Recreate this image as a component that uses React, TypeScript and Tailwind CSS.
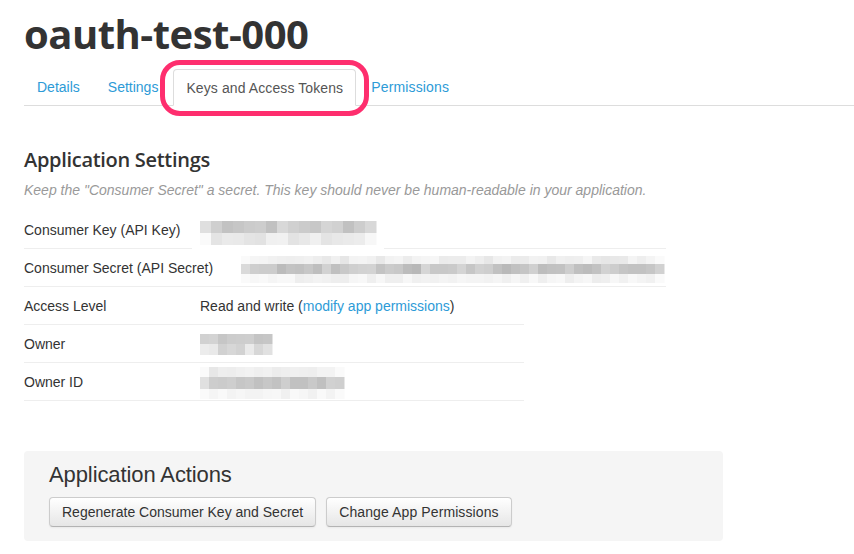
import React from "react";

type RowSpec = { y: number; h: number; base: number; spread: number };

function rand(seed: number) {
  let s = seed;
  return () => {
    s = (s * 9301 + 49297) % 233280;
    return s / 233280;
  };
}

function Blur({
  width,
  height,
  x0,
  cells,
  cell,
  rows,
  seed,
  edge = true,
}: {
  width: number;
  height: number;
  x0: number;
  cells: number;
  cell: number;
  rows: RowSpec[];
  seed: number;
  edge?: boolean;
}) {
  const r = rand(seed);
  const rects: React.ReactNode[] = [];
  rows.forEach((row, ri) => {
    for (let i = 0; i < cells; i++) {
      let v = Math.round(row.base + (r() - 0.5) * 2 * row.spread);
      if (edge && (i === 0 || i === cells - 1)) v = Math.min(250, v + 18);
      v = Math.max(160, Math.min(252, v));
      rects.push(
        <rect
          key={`${ri}-${i}`}
          x={x0 + i * cell}
          y={row.y}
          width={cell + 0.5}
          height={row.h}
          fill={`rgb(${v},${v},${v})`}
        />
      );
    }
  });
  return (
    <svg width={width} height={height} className="block shrink-0 overflow-visible">
      <rect x={0} y={0} width={width} height={height} fill="#ffffff" />
      {rects}
    </svg>
  );
}

const label = "text-[14px] leading-5 text-[#333] pt-[9px] pb-[7px]";
const tab = "px-[13px] mr-[2px] py-2 text-[14px] leading-5 text-[#2d9bd7]";
const btn =
  "h-[30px] px-[12px] text-[14px] leading-5 text-[#333] rounded-[4px] border border-[#ccc] border-b-[#b3b3b3] bg-gradient-to-b from-white to-[#e6e6e6] shadow-[inset_0_1px_0_rgba(255,255,255,0.2),0_1px_2px_rgba(0,0,0,0.05)]";

export default function App() {
  return (
    <div
      className="w-[854px] h-[554px] overflow-hidden bg-white pl-6 relative"
      style={{ fontFamily: '"Liberation Sans", Arial, sans-serif' }}
    >
      <h1
        className="pt-[11px] text-[40px] leading-[46px] font-bold tracking-[-0.5px] text-[#333]"
        style={{ fontFamily: '"Open Sans", sans-serif' }}
      >
        oauth-test-000
      </h1>

      {/* tabs */}
      <div className="mt-[12px] flex border-b border-[#ddd] h-[37px]">
        <a className={tab}>Details</a>
        <a className={tab}>Settings</a>
        <a className="px-[12px] mr-[2px] py-2 text-[14px] leading-5 tracking-[0.1px] text-[#555] bg-white border border-[#ddd] border-b-transparent rounded-t-[4px] -mb-px h-[37px]">
          Keys and Access Tokens
        </a>
        <a className={`${tab} tracking-[0.15px]`}>Permissions</a>
      </div>

      {/* highlight */}
      <div className="absolute left-[160px] top-[60px] w-[209px] h-[56px] rounded-[20px] border-[5px] border-[#fe2e6e] pointer-events-none" />

      <h2
        className="mt-[39px] text-[20px] leading-[30px] font-semibold tracking-[-0.3px] text-[#333]"
        style={{ fontFamily: '"Open Sans", sans-serif' }}
      >
        Application Settings
      </h2>
      <p className="mt-[5px] text-[14px] leading-5 italic text-[#999]">
        Keep the "Consumer Secret" a secret. This key should never be human-readable in your application.
      </p>

      <div className="mt-[11px]">
        {/* Consumer Key */}
        <div className="w-[642px]">
          <div className="flex h-[37px]">
            <div className={`${label} w-[168px]`}>Consumer Key (API Key)</div>
            <Blur
              width={192}
              height={38}
              x0={8}
              cells={16}
              cell={11}
              seed={7}
              rows={[
                { y: 10, h: 12, base: 205, spread: 14 },
                { y: 22, h: 12, base: 233, spread: 8 },
              ]}
            />
          </div>
          <div className="flex h-px">
            <div className="w-[168px] bg-[#eee]" />
            <div className="w-[192px]" />
            <div className="flex-1 bg-[#eee]" />
          </div>
        </div>

        {/* Consumer Secret */}
        <div className="w-[642px] flex h-[38px] border-b border-[#eee]">
          <div className={`${label} w-[221px]`}>Consumer Secret (API Secret)</div>
          <Blur
            width={427}
            height={37}
            x0={2}
            cells={47}
            cell={9}
            seed={23}
            rows={[
              { y: 7, h: 8, base: 238, spread: 8 },
              { y: 15, h: 10, base: 198, spread: 16 },
              { y: 25, h: 9, base: 243, spread: 6 },
            ]}
          />
        </div>

        {/* Access Level */}
        <div className="w-[500px] flex h-[38px] border-b border-[#eee]">
          <div className={`${label} w-[176px]`}>Access Level</div>
          <div className={label}>
            Read and write (<a className="text-[#2d9bd7]">modify app permissions</a>)
          </div>
        </div>

        {/* Owner */}
        <div className="w-[500px] flex h-[38px] border-b border-[#eee]">
          <div className={`${label} w-[176px]`}>Owner</div>
          <Blur
            width={80}
            height={37}
            x0={0}
            cells={8}
            cell={9}
            seed={41}
            edge={false}
            rows={[
              { y: 9, h: 10, base: 203, spread: 8 },
              { y: 19, h: 11, base: 222, spread: 18 },
            ]}
          />
        </div>

        {/* Owner ID */}
        <div className="w-[500px] flex h-[38px] border-b border-[#eee]">
          <div className={`${label} w-[176px]`}>Owner ID</div>
          <Blur
            width={150}
            height={37}
            x0={0}
            cells={16}
            cell={9}
            seed={59}
            rows={[
              { y: 4, h: 10, base: 238, spread: 7 },
              { y: 14, h: 12, base: 200, spread: 14 },
              { y: 26, h: 10, base: 245, spread: 5 },
            ]}
          />
        </div>
      </div>

      {/* Application Actions */}
      <div className="mt-[50px] w-[699px] h-[90px] bg-[#f5f5f5] rounded-[4px] px-[25px] pt-[10px]">
        <h3 className="text-[22px] leading-[28px] text-[#333] tracking-[-0.1px]">Application Actions</h3>
        <div className="mt-[8px] flex gap-[10px]">
          <button className={btn}>Regenerate Consumer Key and Secret</button>
          <button className={`${btn} tracking-[0.1px]`}>Change App Permissions</button>
        </div>
      </div>
    </div>
  );
}
